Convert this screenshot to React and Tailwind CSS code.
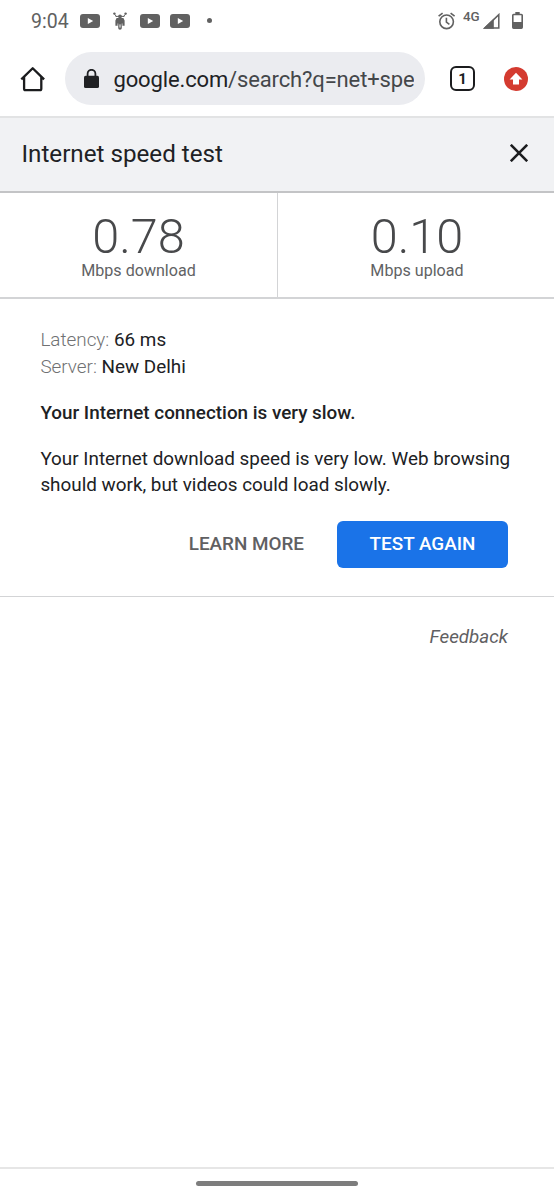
const YoutubeIcon = () => (
  <svg width="20" height="14" viewBox="0 0 20 14">
    <rect width="20" height="14" rx="3" fill="#616161" />
    <path d="M7.8 4v6l5.4-3z" fill="#fff" />
  </svg>
);

const BikeIcon = () => (
  <svg width="14" height="18" viewBox="0 0 14 18" fill="#616161">
    <circle cx="1.4" cy="1.6" r="1.2" />
    <circle cx="12.6" cy="1.6" r="1.2" />
    <path
      d="M1.6 2.2 3.6 4.8M12.4 2.2 10.4 4.8M2.6 4.4h8.8"
      fill="none"
      stroke="#616161"
      strokeWidth="1"
    />
    <circle cx="7" cy="4.4" r="1.9" />
    <path d="M3.6 6h6.8l1.2 2.6v5.2H9.4v-2.4H4.6v2.4H2.4V8.6z" />
    <path d="M5.2 10.8h3.6V16A1.8 1.8 0 0 1 7 17.8 1.8 1.8 0 0 1 5.2 16z" />
    <path d="M7 12.4v3.2" stroke="#fff" strokeWidth="1" />
  </svg>
);

const AlarmIcon = () => (
  <svg
    width="18"
    height="18"
    viewBox="0 0 18 18"
    fill="none"
    stroke="#616161"
    strokeWidth="1.6"
  >
    <circle cx="8.6" cy="9.8" r="6.8" />
    <path d="M.6 4.2 4.6 1.1M16.6 4.2 12.6 1.1M8.4 5.8v4.4l3 2.2" />
  </svg>
);

const SignalIcon = () => (
  <svg width="17" height="16" viewBox="0 0 17 16">
    <path d="M0 15.8 10.8 5.4v10.4z" fill="#616161" />
    <path d="M1.8 15.1 15.8 1.6v13.5z" fill="none" stroke="#616161" strokeWidth="1.5" />
  </svg>
);

const BatteryIcon = () => (
  <svg width="11" height="17" viewBox="0 0 11 17">
    <path d="M3.3 0h4.4v2.5H3.3z" fill="#616161" />
    <rect x=".8" y="2.5" width="9.4" height="13.6" rx=".8" fill="none" stroke="#616161" strokeWidth="1.6" />
    <path d="M1 10h9v6H1z" fill="#616161" />
  </svg>
);

const HomeIcon = () => (
  <svg
    width="26"
    height="26"
    viewBox="0 0 26 26"
    fill="none"
    stroke="#1b1c1e"
    strokeWidth="2.3"
    strokeLinejoin="round"
  >
    <path d="M1.3 13.4 12.7 2.2l11.4 11.2M4.1 11v11.7a1.4 1.4 0 0 0 1.4 1.4h14.4a1.4 1.4 0 0 0 1.4-1.4V11" />
  </svg>
);

const LockIcon = () => (
  <svg width="15" height="20" viewBox="0 0 15 20">
    <rect y="6.8" width="15" height="12.2" rx="1.6" fill="#202124" />
    <path d="M3.6 7.5V4.7a3.9 3.9 0 0 1 7.8 0v2.8" fill="none" stroke="#202124" strokeWidth="1.8" />
  </svg>
);

const UpdateIcon = () => (
  <svg width="24" height="24" viewBox="0 0 24 24">
    <circle cx="12" cy="12" r="12" fill="#d43b30" />
    <path d="M12 5.8 18.4 12.4H15v5.2H9v-5.2H5.6z" fill="#fff" />
  </svg>
);

const CloseIcon = () => (
  <svg width="18" height="18" viewBox="0 0 18 18" stroke="#1b1c1e" strokeWidth="2.6">
    <path d="M.8.8l16.4 16.4M17.2.8.8 17.2" />
  </svg>
);

const results = [
  { value: "0.78", label: "Mbps download" },
  { value: "0.10", label: "Mbps upload" },
];

function StatusBar() {
  return (
    <div className="flex h-[42px] items-center justify-between pr-[31px] pb-px pl-[31px] text-[#616161]">
      <div className="flex items-center">
        <span className="w-[49px] pt-[2px] text-[19.5px] leading-none">9:04</span>
        <YoutubeIcon />
        <div className="mr-[13px] ml-[13px]">
          <BikeIcon />
        </div>
        <YoutubeIcon />
        <div className="ml-[9.5px]">
          <YoutubeIcon />
        </div>
        <span className="ml-[17px] size-[5px] rounded-full bg-[#616161]" />
      </div>
      <div className="flex items-center">
        <AlarmIcon />
        <span className="mb-[8px] ml-[7px] w-[20px] text-[13.4px] leading-none font-medium">4G</span>
        <SignalIcon />
        <div className="ml-[12px]">
          <BatteryIcon />
        </div>
      </div>
    </div>
  );
}

function Toolbar() {
  return (
    <div className="flex h-[76px] border-b-2 border-[#e2e3e4] pt-[10px] pr-[26px] pl-[20px]">
      <div className="flex h-[53px] w-full items-center">
        <HomeIcon />
        <div className="ml-[19px] flex h-[53px] w-[360px] items-center rounded-full bg-[#ebecf0] pl-[19px]">
          <LockIcon />
          <div className="mt-[2px] ml-[14.5px] w-[300.5px] overflow-hidden text-[22px] leading-[30px] tracking-[-0.14px] whitespace-nowrap text-[#44474a]">
            <span className="text-[#202124]">google.com</span>/search?q=net+speed+test
          </div>
        </div>
        <div className="ml-[25px] flex size-[25px] items-center justify-center rounded-[6px] border-[2.4px] border-[#1b1c1e] pt-px text-[15px] leading-none font-bold text-[#1b1c1e]">
          1
        </div>
        <div className="ml-auto">
          <UpdateIcon />
        </div>
      </div>
    </div>
  );
}

export default function App() {
  return (
    <div className="flex h-[1200px] w-[554px] flex-col overflow-hidden bg-white font-[Roboto,sans-serif] text-[#202124]">
      <StatusBar />
      <Toolbar />

      {/* Card header */}
      <div className="flex h-[75px] items-center justify-between border-b-2 border-[#c3c4c6] bg-[#f1f2f4] pr-[26px] pb-[4px] pl-[21.5px]">
        <h1 className="pt-[3px] text-[24.2px] leading-none">Internet speed test</h1>
        <CloseIcon />
      </div>

      {/* Results */}
      <div className="flex h-[106px] border-b-2 border-[#d3d4d6]">
        {results.map((r) => (
          <div
            key={r.label}
            className="flex w-[278px] shrink-0 flex-col items-center border-r border-[#d3d4d6] pt-[19px] last:border-r-0"
          >
            <span className="text-[48.6px] leading-[49px] font-light text-[#48494b]">{r.value}</span>
            <span className="text-[16.1px] leading-[19px] text-[#616264]">{r.label}</span>
          </div>
        ))}
      </div>

      {/* Details */}
      <div className="h-[298px] border-b border-[#d3d4d6] pt-[28px] pr-[40px] pl-[40.4px] text-[18.86px] leading-[26.6px]">
        <p>
          <span className="font-light text-[#707173]">Latency:</span> 66 ms
        </p>
        <p>
          <span className="font-light text-[#707173]">Server:</span> New Delhi
        </p>
        <p className="mt-[19.4px] font-medium">Your Internet connection is very slow.</p>
        <p className="mt-[19.6px] whitespace-nowrap">
          Your Internet download speed is very low. Web browsing
          <br />
          should work, but videos could load slowly.
        </p>
        <div className="mt-[22px] mr-[6px] flex items-center justify-end">
          <button className="mr-[33px] font-medium text-[#5f6062]">LEARN MORE</button>
          <button className="h-[47px] w-[171px] rounded-[6px] bg-[#1a73e8] font-medium text-white">
            TEST AGAIN
          </button>
        </div>
      </div>

      <p className="pt-[27px] pr-[46px] text-right text-[18.8px] leading-[26px] text-[#5f6062] italic">
        Feedback
      </p>

      {/* Gesture bar */}
      <div className="mt-auto flex h-[33px] justify-center border-t-2 border-[#e6e6e6] pt-[12px]">
        <div className="h-[5px] w-[162px] rounded-full bg-[#7d7d7d]" />
      </div>
    </div>
  );
}
